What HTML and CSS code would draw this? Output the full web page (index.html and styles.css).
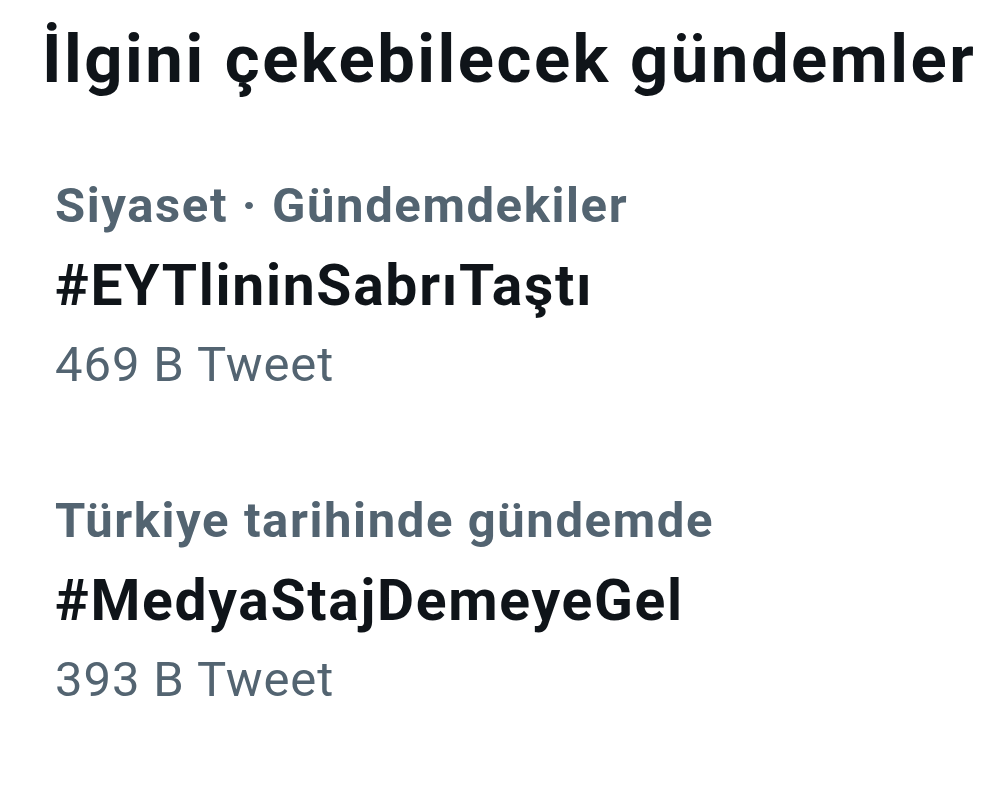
FILE: index.html
```html
<!DOCTYPE html>
<html lang="tr">
<head>
<meta charset="utf-8">
<link rel="stylesheet" href="styles.css">
</head>
<body>
<main class="panel">
  <h1 class="title">İlgini çekebilecek gündemler</h1>
  <section class="trend">
    <div class="meta">Siyaset · Gündemdekiler</div>
    <div class="tag">#EYTlininSabrıTaştı</div>
    <div class="count">469 B Tweet</div>
  </section>
  <section class="trend">
    <div class="meta">Türkiye tarihinde gündemde</div>
    <div class="tag">#MedyaStajDemeyeGel</div>
    <div class="count">393 B Tweet</div>
  </section>
</main>
</body>
</html>
```
FILE: styles.css
```css
html, body {
  margin: 0;
  padding: 0;
  background: #ffffff;
}
body {
  font-family: Roboto, "Liberation Sans", sans-serif;
  width: 998px;
  height: 793px;
  overflow: hidden;
}
.panel {
  display: flex;
  flex-direction: column;
  padding: 19px 0 0 42px;
}
.title {
  margin: 0;
  font-size: 67px;
  font-weight: 700;
  line-height: 80px;
  letter-spacing: 2.5px;
  color: #0f1419;
  white-space: nowrap;
}
.trend {
  display: flex;
  flex-direction: column;
  padding: 0 0 0 13px;
  margin-top: 67px;
}
.trend + .trend {
  margin-top: 77px;
}
.meta {
  font-size: 49px;
  font-weight: 700;
  line-height: 80px;
  letter-spacing: 1.6px;
  color: #536471;
}
.tag {
  font-size: 57px;
  font-weight: 700;
  line-height: 80px;
  letter-spacing: 1.7px;
  color: #0f1419;
}
.count {
  font-size: 49px;
  font-weight: 400;
  line-height: 78px;
  letter-spacing: 0.9px;
  color: #536471;
}
```
